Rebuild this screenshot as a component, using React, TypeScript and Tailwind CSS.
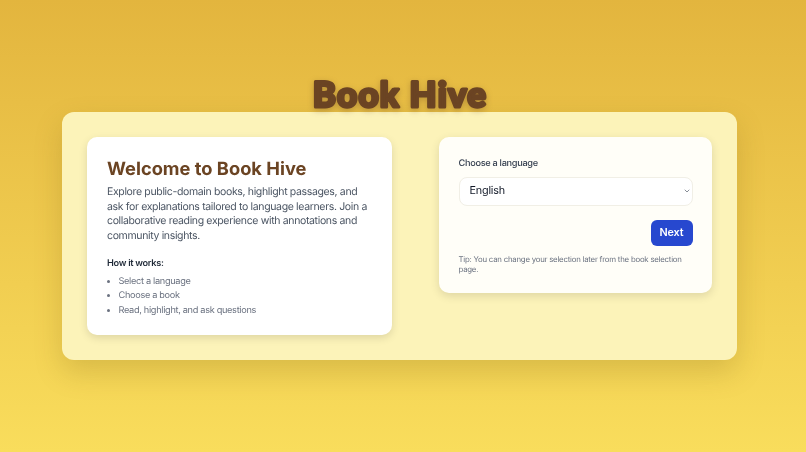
import { ChevronDown } from 'lucide-react';

const steps = ['Select a language', 'Choose a book', 'Read, highlight, and ask questions'];

export default function App() {
  return (
    <div className="h-[452px] overflow-hidden bg-gradient-to-b from-[#e3b53e] to-[#f9dd5c] font-['Inter',sans-serif] [text-rendering:geometricPrecision] flex flex-col items-center pt-[72px] pr-[7px]">
      {/* Logo wordmark */}
      <h1 className="h-[40px] w-[200px] [filter:drop-shadow(0_2px_3px_rgba(107,68,35,0.35))]">
        <svg width="200" height="46" viewBox="0 0 200 46" className="overflow-visible">
          <text
            x="100"
            y="35"
            textAnchor="middle"
            fontFamily="Lato, sans-serif"
            fontWeight="900"
            fontSize="35"
            letterSpacing="1.2"
            fill="#6b4423"
            stroke="#6b4423"
            strokeWidth="3"
            strokeLinejoin="round"
          >
            Book Hive
          </text>
        </svg>
      </h1>

      <div className="w-[675px] h-[248px] rounded-xl bg-[#fcf3b9] p-[25px] flex justify-between items-start shadow-[0_12px_28px_rgba(120,90,20,0.22)]">
        {/* Intro card */}
        <div className="w-[305px] h-[198px] rounded-[10px] bg-white px-[20px] pt-[20px] shadow-[0_3px_8px_rgba(0,0,0,0.12)] will-change-transform">
          <h2 className="text-[18.3px] leading-[24px] font-bold text-[#6b4423]">Welcome to Book Hive</h2>
          <p className="mt-[4px] text-[10.5px] tracking-[-0.35px] leading-[14.6px] text-[#4b5563]">
            Explore public-domain books, highlight passages, and ask for explanations tailored to language learners. Join a collaborative reading experience with annotations and community insights.
          </p>
          <h3 className="mt-[15px] text-[9.2px] tracking-[-0.3px] leading-[12px] font-semibold text-[#1f2937]">How it works:</h3>
          <ul className="mt-[4.5px] list-disc pl-[11.5px] text-[9.2px] tracking-[-0.32px] leading-[14.6px] text-[#6b7280]">
            {steps.map(step => (
              <li key={step}>{step}</li>
            ))}
          </ul>
        </div>

        {/* Language picker */}
        <div className="w-[273px] h-[156px] rounded-[10px] bg-[#fffef8] px-[19.5px] pt-[21px] shadow-[0_3px_10px_rgba(0,0,0,0.12)] will-change-transform">
          <label className="block text-[9.2px] tracking-[-0.3px] leading-[12px] font-medium text-[#374151]">Choose a language</label>
          <div className="relative mt-[6px]">
            <select className="w-full h-[29px] appearance-none rounded-lg border border-[#f1efe6] bg-white pl-[10px] text-[10.8px] tracking-[-0.2px] text-[#111827] outline-none">
              <option>English</option>
            </select>
            <ChevronDown className="absolute right-[2px] top-[11px] w-[8px] h-[8px] text-[#4b5563]" strokeWidth={2} />
          </div>
          <div className="mt-[14px] flex justify-end">
            <button className="h-[26px] w-[42px] rounded-md bg-[#2748cf] text-[10.8px] tracking-[-0.15px] font-semibold text-white">Next</button>
          </div>
          <p className="mt-[8px] text-[7.8px] tracking-[-0.22px] leading-[10px] text-[#6b7280]">
            Tip: You can change your selection later from the book selection page.
          </p>
        </div>
      </div>
    </div>
  );
}
